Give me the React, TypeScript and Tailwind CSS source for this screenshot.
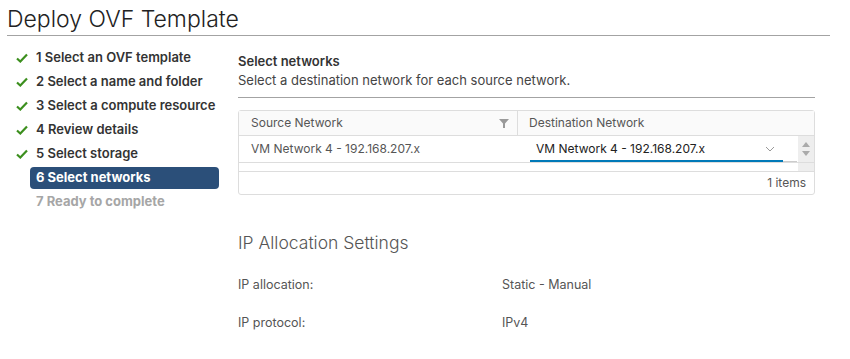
import React from "react";

const font = { fontFamily: "Inter, 'Noto Sans', sans-serif" };

function Check() {
  return (
    <svg width="12" height="10" viewBox="0 0 12 10" className="shrink-0">
      <path d="M1 5.5 L4.3 8.5 L11 1.5" fill="none" stroke="#3c8f1e" strokeWidth="2.2" />
    </svg>
  );
}

const steps = [
  "1 Select an OVF template",
  "2 Select a name and folder",
  "3 Select a compute resource",
  "4 Review details",
  "5 Select storage",
];

export default function App() {
  return (
    <div className="w-[850px] h-[359px] bg-white overflow-hidden text-[#333]" style={font}>
      <div className="pl-[7px] pr-[20px]">
        <div className="h-[36px] border-b border-[#a3a3a3] text-[23px] font-light leading-[34px] pt-[2px] text-[#222]">
          Deploy OVF Template
        </div>
      </div>
      <div className="flex pl-[16px] pt-[9px]">
        <div className="w-[203px] mt-[1px] flex flex-col text-[13px] font-semibold">
          {steps.map((s) => (
            <div key={s} className="h-[24px] flex items-center gap-[8px]">
              <Check />
              <span className="text-[#333]">{s}</span>
            </div>
          ))}
          <div className="h-[24px] flex items-center ml-[14px]">
            <div className="h-[22px] w-[189px] rounded-[4px] bg-[#2b4f79] text-white font-bold flex items-center pl-[6px]">
              6 Select networks
            </div>
          </div>
          <div className="h-[24px] flex items-center ml-[20px] text-[#a6a6a6] font-bold">
            7 Ready to complete
          </div>
        </div>
        <div className="ml-[19px] w-[577px] flex flex-col">
          <div className="text-[13px] font-semibold text-[#333] leading-[18px] mt-[7px]">Select networks</div>
          <div className="text-[13px] text-[#444] leading-[18px] mt-[1px] pb-[8px] border-b border-[#a3a3a3]">
            Select a destination network for each source network.
          </div>
          <div className="mt-[12px] border border-[#ddd] rounded-[3px] text-[12px]">
            <div className="flex h-[25px] bg-[#fafafa] border-b border-[#ddd] text-[#565656]">
              <div className="w-[279px] flex items-center justify-between pl-[12px] pr-[8px] border-r border-[#ddd]">
                <span>Source Network</span>
                <svg width="10" height="9" viewBox="0 0 10 9">
                  <path d="M0 0 H10 L6 4.5 V9 H4 V4.5 Z" fill="#9a9a9a" />
                </svg>
              </div>
              <div className="flex items-center pl-[11px]">Destination Network</div>
            </div>
            <div className="flex h-[27px] border-b border-[#ddd]">
              <div className="w-[279px] flex items-center pl-[12px] text-[12px] text-[#565656]">
                VM Network 4 - 192.168.207.x
              </div>
              <div className="flex-1 flex items-end pl-[12px] pr-[1px]">
                <div className="flex-1 h-[25px] border-b-[2px] border-[#0079b8] flex items-center justify-between pl-[6px] pr-[8px] text-[12px] text-[#222]">
                  <span>VM Network 4 - 192.168.207.x</span>
                  <svg width="10" height="6" viewBox="0 0 10 6">
                    <path d="M1 1 L5 5 L9 1" fill="none" stroke="#999" strokeWidth="1" />
                  </svg>
                </div>
                <div className="w-[14px] h-[25px] border-b border-[#ccc]" />
              </div>
              <div className="w-[16px] bg-[#eee] flex flex-col items-center justify-between py-[6px]">
                <svg width="8" height="5" viewBox="0 0 8 5"><path d="M0 5 L4 0 L8 5 Z" fill="#aaa" /></svg>
                <svg width="8" height="5" viewBox="0 0 8 5"><path d="M0 0 L4 5 L8 0 Z" fill="#aaa" /></svg>
              </div>
            </div>
            <div className="h-[9px] border-b border-[#ddd] flex">
              <div className="flex-1" />
              <div className="w-[16px] bg-[#eee]" />
            </div>
            <div className="h-[22px] flex items-center justify-end pr-[8px] text-[#565656] text-[12px]">
              1 items
            </div>
          </div>
          <div className="mt-[38px] text-[17.5px] font-light text-[#555] leading-[20px]">IP Allocation Settings</div>
          <div className="mt-[23px] flex text-[12.5px] text-[#555] leading-[18px]">
            <div className="w-[264px]">IP allocation:</div>
            <div>Static - Manual</div>
          </div>
          <div className="mt-[20px] flex text-[12.5px] text-[#555] leading-[18px]">
            <div className="w-[264px]">IP protocol:</div>
            <div>IPv4</div>
          </div>
        </div>
      </div>
    </div>
  );
}
